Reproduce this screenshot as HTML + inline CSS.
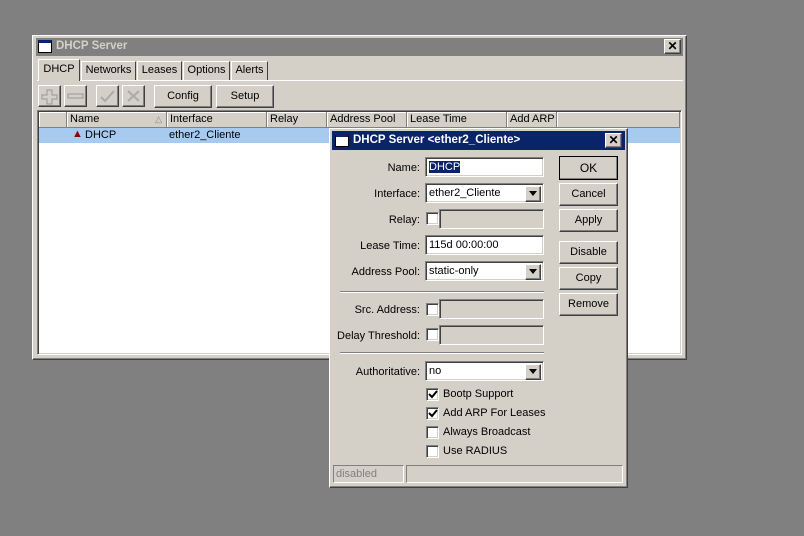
<!DOCTYPE html>
<html><head><style>
*{box-sizing:border-box;margin:0;padding:0}
body{width:804px;height:536px;background:#808080;position:relative;overflow:hidden;font-family:"Liberation Sans",Arial,sans-serif;font-size:11px;color:#000}
.a{position:absolute}
.raised{background:#d4d0c8;border:1px solid;border-color:#fff #404040 #404040 #fff;box-shadow:inset -1px -1px 0 #808080,inset 1px 1px 0 #d4d0c8}
.sunk{background:#fff;border:1px solid;border-color:#808080 #fff #fff #808080;box-shadow:inset 1px 1px 0 #404040,inset -1px -1px 0 #d4d0c8}
.sunkg{background:#d4d0c8;border:1px solid;border-color:#808080 #fff #fff #808080;box-shadow:inset 1px 1px 0 #404040,inset -1px -1px 0 #d4d0c8}
.btn{text-align:center;line-height:20px}
.lbl{position:absolute;right:384px;text-align:right;white-space:nowrap;margin-top:2px}
.inp{line-height:16px;padding-left:3px}
.cb{width:13px;height:13px}
.dd{position:absolute;right:2px;top:2px;width:16px;height:16px}
.hd{position:absolute;top:0;height:16px;line-height:15px;padding-left:3px;border-right:1px solid #808080;border-bottom:1px solid #808080;box-shadow:inset 1px 1px 0 #fff;white-space:nowrap;overflow:hidden}
.tab{position:absolute;top:61px;height:19px;border:1px solid;border-color:#fff #404040 transparent #fff;border-bottom:none;text-align:center;line-height:17px;white-space:nowrap}
.chk{position:absolute;left:1px;top:1px}
</style></head><body>
<div class="a raised" style="left:32px;top:35px;width:655px;height:325px"></div>
<div class="a" style="left:36px;top:38px;width:647px;height:18px;background:#808080"></div>
<div class="a" style="left:38px;top:40px;width:14px;height:13px;background:#fff;border:1px solid #000;border-top:3px solid #0a246a"></div>
<div class="a" style="left:56px;top:40px;color:#d4d0c8;font-weight:bold;font-size:11.5px">DHCP Server</div>
<div class="a raised btn" style="left:664px;top:39px;width:17px;height:15px;line-height:13px;font-weight:bold;font-size:12px">✕</div>
<div class="a" style="left:37px;top:80px;width:646px;height:1px;background:#fff"></div>
<div class="a" style="left:38px;top:59px;width:42px;height:22px;background:#d4d0c8;border:1px solid;border-color:#fff #404040 transparent #fff;border-bottom:none;line-height:18px;text-align:center">DHCP</div>
<div class="tab" style="left:81px;width:55px">Networks</div>
<div class="tab" style="left:137px;width:45px">Leases</div>
<div class="tab" style="left:183px;width:47px">Options</div>
<div class="tab" style="left:231px;width:37px">Alerts</div>
<div class="a raised" style="left:38px;top:85px;width:23px;height:22px"><svg width="21" height="20" viewBox="0 0 21 20"><path d="M8 4h5v5h5v4h-5v5h-5v-5h-5v-4h5z" fill="none" stroke="#999"/></svg></div>
<div class="a raised" style="left:64px;top:85px;width:23px;height:22px"><svg width="21" height="20"><rect x="3" y="8" width="15" height="4" fill="none" stroke="#999"/></svg></div>
<div class="a raised" style="left:96px;top:85px;width:23px;height:22px"><svg width="21" height="20"><path d="M4 11l4 4 9-10" fill="none" stroke="#aaa" stroke-width="2"/></svg></div>
<div class="a raised" style="left:122px;top:85px;width:23px;height:22px"><svg width="21" height="20"><path d="M5 5l11 10M16 5L5 15" fill="none" stroke="#aaa" stroke-width="2"/></svg></div>
<div class="a raised btn" style="left:154px;top:85px;width:58px;height:23px;line-height:21px">Config</div>
<div class="a raised btn" style="left:216px;top:85px;width:58px;height:23px;line-height:21px">Setup</div>
<div class="a sunk" style="left:37px;top:110px;width:645px;height:245px"></div>
<div class="a" style="left:39px;top:112px;width:641px;height:16px;background:#d4d0c8">
<div class="hd" style="left:0;width:28px"></div>
<div class="hd" style="left:28px;width:100px">Name<span style="position:absolute;right:4px;color:#888;font-size:9px">△</span></div>
<div class="hd" style="left:128px;width:100px">Interface</div>
<div class="hd" style="left:228px;width:60px">Relay</div>
<div class="hd" style="left:288px;width:80px">Address Pool</div>
<div class="hd" style="left:368px;width:100px">Lease Time</div>
<div class="hd" style="left:468px;width:50px">Add ARP</div>
<div class="hd" style="left:518px;width:123px"></div>
</div>
<div class="a" style="left:39px;top:128px;width:641px;height:15px;background:#a6caf0"></div>
<div class="a" style="left:72px;top:128px;color:#8b0000;font-size:11px">▲</div>
<div class="a" style="left:85px;top:129px">DHCP</div>
<div class="a" style="left:169px;top:129px">ether2_Cliente</div>
<div class="a raised" style="left:329px;top:128px;width:299px;height:360px"></div>
<div class="a" style="left:332px;top:131px;width:293px;height:19px;background:#0a246a"></div>
<div class="a" style="left:335px;top:134px;width:14px;height:13px;background:#fff;border:1px solid #000;border-top:3px solid #0a246a"></div>
<div class="a" style="left:353px;top:134px;color:#fff;font-weight:bold;font-size:11.5px">DHCP Server &lt;ether2_Cliente&gt;</div>
<div class="a raised btn" style="left:605px;top:133px;width:17px;height:15px;line-height:13px;font-weight:bold;font-size:12px">✕</div>
<div class="lbl" style="top:160px">Name:</div>
<div class="a sunk inp" style="left:425px;top:157px;width:119px;height:20px;padding-top:1px"><span style="background:#0a246a;color:#fff">DHCP</span></div>
<div class="lbl" style="top:186px">Interface:</div>
<div class="a sunk inp" style="left:425px;top:183px;width:119px;height:20px;padding-top:1px">ether2_Cliente<div class="raised dd"><span style="position:absolute;left:3px;top:4px;border:4px solid transparent;border-top:5px solid #000"></span></div></div>
<div class="lbl" style="top:212px">Relay:</div>
<div class="a sunk cb" style="left:426px;top:212px"></div>
<div class="a sunkg" style="left:439px;top:209px;width:105px;height:20px"></div>
<div class="lbl" style="top:238px">Lease Time:</div>
<div class="a sunk inp" style="left:425px;top:235px;width:119px;height:20px;padding-top:1px">115d 00:00:00</div>
<div class="lbl" style="top:264px">Address Pool:</div>
<div class="a sunk inp" style="left:425px;top:261px;width:119px;height:20px;padding-top:1px">static-only<div class="raised dd"><span style="position:absolute;left:3px;top:4px;border:4px solid transparent;border-top:5px solid #000"></span></div></div>
<div class="a" style="left:340px;top:291px;width:204px;height:2px;border-top:1px solid #808080;border-bottom:1px solid #fff"></div>
<div class="lbl" style="top:302px">Src. Address:</div>
<div class="a sunk cb" style="left:426px;top:303px"></div>
<div class="a sunkg" style="left:439px;top:299px;width:105px;height:20px"></div>
<div class="lbl" style="top:328px">Delay Threshold:</div>
<div class="a sunk cb" style="left:426px;top:328px"></div>
<div class="a sunkg" style="left:439px;top:325px;width:105px;height:20px"></div>
<div class="a" style="left:340px;top:352px;width:204px;height:2px;border-top:1px solid #808080;border-bottom:1px solid #fff"></div>
<div class="lbl" style="top:364px">Authoritative:</div>
<div class="a sunk inp" style="left:425px;top:361px;width:119px;height:20px;padding-top:1px">no<div class="raised dd"><span style="position:absolute;left:3px;top:4px;border:4px solid transparent;border-top:5px solid #000"></span></div></div>
<div class="a sunk cb" style="left:426px;top:388px"><svg class="chk" width="10" height="10"><path d="M1 4l3 3 5-6" fill="none" stroke="#000" stroke-width="2"/></svg></div><div class="a" style="left:443px;top:388px">Bootp Support</div>
<div class="a sunk cb" style="left:426px;top:407px"><svg class="chk" width="10" height="10"><path d="M1 4l3 3 5-6" fill="none" stroke="#000" stroke-width="2"/></svg></div><div class="a" style="left:443px;top:407px">Add ARP For Leases</div>
<div class="a sunk cb" style="left:426px;top:426px"></div><div class="a" style="left:443px;top:426px">Always Broadcast</div>
<div class="a sunk cb" style="left:426px;top:445px"></div><div class="a" style="left:443px;top:445px">Use RADIUS</div>
<div class="a sunkg" style="left:333px;top:465px;width:71px;height:18px;color:#808080;line-height:16px;padding-left:2px;box-shadow:none">disabled</div>
<div class="a sunkg" style="left:406px;top:465px;width:217px;height:18px;box-shadow:none"></div>
<div class="a raised btn" style="left:559px;top:156px;width:59px;height:24px;border:1px solid #000;line-height:22px;font-size:12px">OK</div>
<div class="a raised btn" style="left:559px;top:183px;width:59px;height:23px">Cancel</div>
<div class="a raised btn" style="left:559px;top:209px;width:59px;height:23px">Apply</div>
<div class="a raised btn" style="left:559px;top:241px;width:59px;height:23px">Disable</div>
<div class="a raised btn" style="left:559px;top:267px;width:59px;height:23px">Copy</div>
<div class="a raised btn" style="left:559px;top:293px;width:59px;height:23px">Remove</div>
</body></html>
